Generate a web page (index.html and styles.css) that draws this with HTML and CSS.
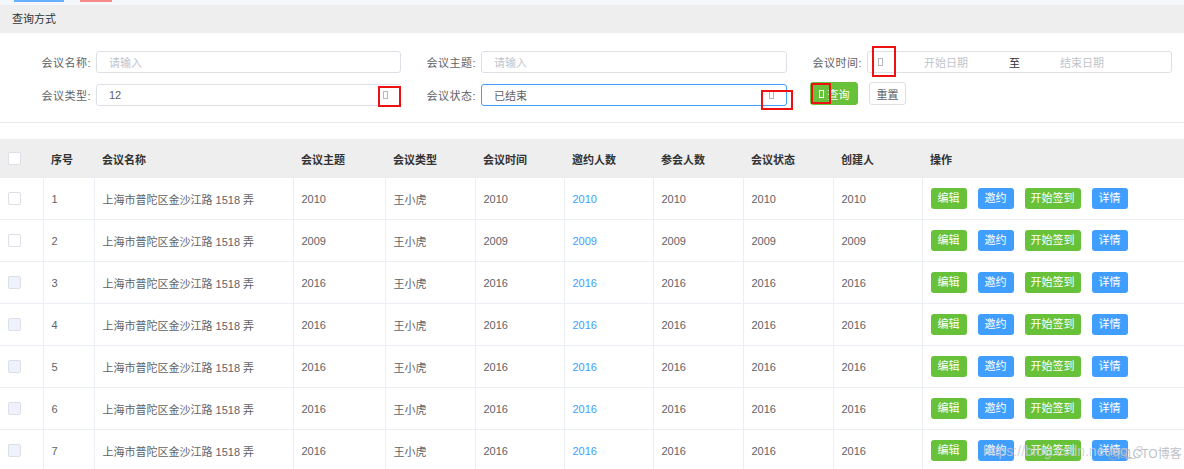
FILE: index.html
```html
<!DOCTYPE html>
<html lang="zh-CN">
<head>
<meta charset="utf-8">
<title>会议管理</title>
<link rel="stylesheet" href="styles.css">
</head>
<body>
<div class="page">
  <div class="topstrip"><span class="tb tb-blue"></span><span class="tb tb-red"></span></div>
  <div class="panel-title">查询方式</div>
  <div class="form">
    <div class="frow">
      <div class="field"><label class="flabel">会议名称:</label><div class="input"><span class="ph">请输入</span></div></div>
      <div class="field"><label class="flabel">会议主题:</label><div class="input"><span class="ph">请输入</span></div></div>
      <div class="field"><label class="flabel">会议时间:</label>
        <div class="input range">
          <span class="tofu ricon"></span>
          <span class="rin ph">开始日期</span>
          <span class="rsep">至</span>
          <span class="rin ph">结束日期</span>
        </div>
      </div>
    </div>
    <div class="frow">
      <div class="field"><label class="flabel">会议类型:</label><div class="input sel"><span class="val">12</span><span class="tofu"></span></div></div>
      <div class="field"><label class="flabel">会议状态:</label><div class="input sel focus"><span class="val">已结束</span><span class="tofu"></span></div></div>
      <div class="field actions">
        <button class="btn btn-query"><span class="tofu tofu-w"></span>查询</button>
        <button class="btn btn-reset">重置</button>
      </div>
    </div>
  </div>

  <table class="grid">
    <colgroup>
      <col class="c-chk"><col class="c-no"><col class="c-name"><col class="c-sub"><col class="c-type"><col class="c-time"><col class="c-inv"><col class="c-att"><col class="c-st"><col class="c-cr"><col class="c-op">
    </colgroup>
    <thead>
      <tr>
        <th class="chk-cell"><span class="chk"></span></th>
        <th>序号</th><th>会议名称</th><th>会议主题</th><th>会议类型</th><th>会议时间</th><th>邀约人数</th><th>参会人数</th><th>会议状态</th><th>创建人</th><th>操作</th>
      </tr>
    </thead>
    <tbody>
      <tr><td class="chk-cell"><span class="chk"></span></td><td>1</td><td>上海市普陀区金沙江路 1518 弄</td><td>2010</td><td>王小虎</td><td>2010</td><td class="link">2010</td><td>2010</td><td>2010</td><td>2010</td>
        <td class="ops"><span class="b g">编辑</span><span class="b bl">邀约</span><span class="b g w">开始签到</span><span class="b bl">详情</span></td></tr>
      <tr><td class="chk-cell"><span class="chk"></span></td><td>2</td><td>上海市普陀区金沙江路 1518 弄</td><td>2009</td><td>王小虎</td><td>2009</td><td class="link">2009</td><td>2009</td><td>2009</td><td>2009</td>
        <td class="ops"><span class="b g">编辑</span><span class="b bl">邀约</span><span class="b g w">开始签到</span><span class="b bl">详情</span></td></tr>
      <tr><td class="chk-cell"><span class="chk dis"></span></td><td>3</td><td>上海市普陀区金沙江路 1518 弄</td><td>2016</td><td>王小虎</td><td>2016</td><td class="link">2016</td><td>2016</td><td>2016</td><td>2016</td>
        <td class="ops"><span class="b g">编辑</span><span class="b bl">邀约</span><span class="b g w">开始签到</span><span class="b bl">详情</span></td></tr>
      <tr><td class="chk-cell"><span class="chk dis"></span></td><td>4</td><td>上海市普陀区金沙江路 1518 弄</td><td>2016</td><td>王小虎</td><td>2016</td><td class="link">2016</td><td>2016</td><td>2016</td><td>2016</td>
        <td class="ops"><span class="b g">编辑</span><span class="b bl">邀约</span><span class="b g w">开始签到</span><span class="b bl">详情</span></td></tr>
      <tr><td class="chk-cell"><span class="chk dis"></span></td><td>5</td><td>上海市普陀区金沙江路 1518 弄</td><td>2016</td><td>王小虎</td><td>2016</td><td class="link">2016</td><td>2016</td><td>2016</td><td>2016</td>
        <td class="ops"><span class="b g">编辑</span><span class="b bl">邀约</span><span class="b g w">开始签到</span><span class="b bl">详情</span></td></tr>
      <tr><td class="chk-cell"><span class="chk dis"></span></td><td>6</td><td>上海市普陀区金沙江路 1518 弄</td><td>2016</td><td>王小虎</td><td>2016</td><td class="link">2016</td><td>2016</td><td>2016</td><td>2016</td>
        <td class="ops"><span class="b g">编辑</span><span class="b bl">邀约</span><span class="b g w">开始签到</span><span class="b bl">详情</span></td></tr>
      <tr><td class="chk-cell"><span class="chk dis"></span></td><td>7</td><td>上海市普陀区金沙江路 1518 弄</td><td>2016</td><td>王小虎</td><td>2016</td><td class="link">2016</td><td>2016</td><td>2016</td><td>2016</td>
        <td class="ops"><span class="b g">编辑</span><span class="b bl">邀约</span><span class="b g w">开始签到</span><span class="b bl">详情</span></td></tr>
    </tbody>
  </table>

  <div class="mark mark-1"></div>
  <div class="mark mark-2"></div>
  <div class="mark mark-3"></div>
  <div class="mark mark-4"></div>
  <div class="wm"><span class="wm-url">https://blog.csdn.net/qq_3</span><span class="wm-site">@51CTO博客</span></div>
</div>
</body>
</html>
```

FILE: styles.css
```css
html, body {
  margin: 0;
  padding: 0;
  background: #fff;
}
body {
  font-family: "Liberation Sans", "Noto Sans CJK SC", sans-serif;
  font-size: 11px;
  color: #606266;
}
.page {
  position: relative;
  width: 1184px;
  height: 469px;
  overflow: hidden;
}
.topstrip {
  height: 5px;
  background: #f4f7fb;
  display: flex;
  align-items: flex-start;
}
.tb { height: 2px; display: block; }
.tb-blue { margin-left: 14px; width: 50px; background: #66b1ff; }
.tb-red { margin-left: 16px; width: 32px; background: #f78989; }

.panel-title {
  height: 28px;
  line-height: 28px;
  background: #eeeeee;
  padding-left: 12px;
  color: #333;
}

.form {
  padding: 18px 0 16px 16px;
  border-bottom: 1px solid #ebebeb;
  display: flex;
  flex-direction: column;
  gap: 11px;
}
.frow {
  display: grid;
  grid-template-columns: 385px 386px 385px;
  height: 22px;
}
.field {
  display: flex;
  align-items: center;
}
.flabel {
  width: 75px;
  margin-right: 5px;
  text-align: right;
  flex: none;
  color: #606266;
  letter-spacing: 0.5px;
}
.input {
  flex: 1;
  height: 22px;
  box-sizing: border-box;
  border: 1px solid #dcdfe6;
  border-radius: 3px;
  display: flex;
  align-items: center;
  padding: 0 12px;
}
.input.sel { justify-content: space-between; }
.input.focus { border-color: #409eff; }
.ph { color: #c0c4cc; }
.val { color: #606266; }
.tofu {
  display: inline-block;
  width: 3px;
  height: 6px;
  border: 1px solid #b4b7bd;
}
.tofu-w { border-color: #fff; }

.range { padding: 0; }
.ricon { margin-left: 10px; flex: none; }
.rin { width: 126px; text-align: center; flex: none; }
.rsep { width: 10px; text-align: center; color: #303133; flex: none; }

.actions {
  align-self: start;
  margin-top: -2px;
  margin-left: 23px;
  gap: 11px;
}
.btn {
  height: 23px;
  box-sizing: border-box;
  border-radius: 3px;
  font-family: inherit;
  font-size: 11px;
  padding: 0;
  display: flex;
  align-items: center;
  justify-content: center;
}
.btn-query {
  width: 48px;
  background: #67c23a;
  border: 1px solid #67c23a;
  color: #fff;
  gap: 4px;
}
.btn-reset {
  width: 37px;
  background: #fff;
  border: 1px solid #dcdfe6;
  color: #606266;
}

.grid {
  margin-top: 16px;
  width: 1184px;
  table-layout: fixed;
  border-collapse: collapse;
}
.c-chk { width: 43px; }
.c-no { width: 51px; }
.c-name { width: 199px; }
.c-sub { width: 92px; }
.c-type { width: 90px; }
.c-time { width: 89px; }
.c-inv { width: 89px; }
.c-att { width: 90px; }
.c-st { width: 90px; }
.c-cr { width: 89px; }
.c-op { width: 262px; }

.grid th {
  height: 39px;
  padding: 0 8px;
  background: #eeeeee;
  text-align: left;
  font-weight: bold;
  color: #333;
}
.grid td {
  height: 41px;
  padding: 0 8px;
  border-bottom: 1px solid #ebeef5;
  border-left: 1px solid #ebeef5;
  white-space: nowrap;
  overflow: hidden;
}
.grid td:first-child { border-left: none; }
.grid .chk-cell { padding: 0 0 0 8px; }
.chk {
  display: block;
  width: 11px;
  height: 11px;
  border: 1px solid #dcdfe6;
  border-radius: 2px;
  background: #fff;
}
.chk.dis { background: #edf2fc; }
.grid td.link { color: #409eff; }
.ops { font-size: 0; }
.b {
  display: inline-block;
  height: 21px;
  line-height: 21px;
  padding: 0 7px;
  border-radius: 3px;
  color: #fff;
  font-size: 11px;
  margin-right: 11px;
  vertical-align: middle;
}
.b.w { padding: 0 6px; }
.b.g { background: #67c23a; }
.b.bl { background: #409eff; }

.mark {
  position: absolute;
  border: 2px solid #ee1111;
  box-sizing: border-box;
}
.mark-1 { left: 378px; top: 86px; width: 23px; height: 21px; }
.mark-2 { left: 761px; top: 90px; width: 32px; height: 20px; }
.mark-3 { left: 872px; top: 46px; width: 24px; height: 31px; }
.mark-4 { left: 811px; top: 83px; width: 20px; height: 21px; }

.wm {
  position: absolute;
  left: 983px;
  top: 443px;
  font-size: 14px;
  color: rgba(200, 205, 215, 0.85);
  white-space: nowrap;
}
.wm-site {
  position: absolute;
  left: 124px;
  top: 1px;
  font-size: 12px;
  color: rgba(170, 175, 185, 0.8);
}
```
